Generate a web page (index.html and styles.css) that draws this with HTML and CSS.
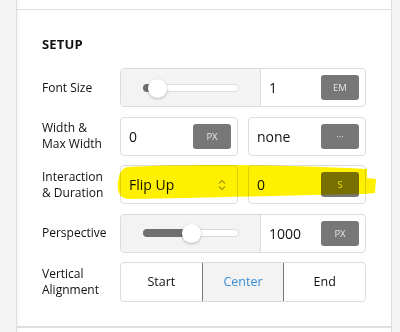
FILE: index.html
```html
<!DOCTYPE html>
<html lang="en">
<head>
  <meta charset="UTF-8" />
  <title>Setup</title>
  <link rel="stylesheet" href="styles.css">
</head>
<body>
  <div class="side"></div>
  <div class="panel">
    <div class="section top"></div>

    <div class="section setup">
      <h3>SETUP</h3>

      <div class="row">
        <div class="label">Font Size</div>
        <div class="box">
          <div class="range">
            <div class="track"><div class="fill" style="width: 14px"></div><div class="knob" style="left: 14px"></div></div>
          </div>
          <div class="field"><span class="val">1</span><span class="unit">EM</span></div>
        </div>
      </div>

      <div class="row">
        <div class="label">Width &amp;<br />Max Width</div>
        <div class="pair">
          <div class="box half"><div class="field"><span class="val">0</span><span class="unit">PX</span></div></div>
          <div class="box half"><div class="field"><span class="val">none</span><span class="unit">···</span></div></div>
        </div>
      </div>

      <div class="row">
        <div class="label">Interaction<br />&amp; Duration</div>
        <div class="pair">
          <div class="box half">
            <div class="field select"><span class="val">Flip Up</span>
              <svg class="chev" width="10" height="14" viewBox="0 0 10 14"><path d="M2 5.5 L5 2.5 L8 5.5 M2 8.5 L5 11.5 L8 8.5" fill="none" stroke="#aaa" stroke-width="1.3"/></svg>
            </div>
          </div>
          <div class="box half"><div class="field"><span class="val">0</span><span class="unit">S</span></div></div>
        </div>
        <svg class="marker" width="270" height="40" viewBox="0 0 270 40">
          <path d="M13 4 C60 1 160 1 251 6 L251 15 L260 16 L259 30 L248 31 C180 32 90 35 12 36 C2 35 0 26 3 13 C5 7 8 4 13 4 Z" fill="#fff000"/>
        </svg>
      </div>

      <div class="row">
        <div class="label">Perspective</div>
        <div class="box">
          <div class="range">
            <div class="track"><div class="fill" style="width: 48px"></div><div class="knob" style="left: 48px"></div></div>
          </div>
          <div class="field"><span class="val">1000</span><span class="unit">PX</span></div>
        </div>
      </div>

      <div class="row">
        <div class="label">Vertical<br />Alignment</div>
        <div class="box seg">
          <div class="opt">Start</div>
          <div class="opt on">Center</div>
          <div class="opt">End</div>
        </div>
      </div>
    </div>

    <div class="section"></div>
  </div>
</body>
</html>
```
FILE: styles.css
```css
body { margin: 0; background: #f3f3f3; font-family: "Open Sans", "Noto Sans", sans-serif; color: #111; display: flex; height: 332px; overflow: hidden; }
.side { width: 16px; flex: none; }
.panel { width: 374px; flex: none; background: #fff; border-left: 1px solid #dedede; border-right: 1px solid #dedede; box-shadow: inset 4px 0 4px -3px rgba(0,0,0,0.06); }
.section { border-bottom: 1px solid #dedede; }
.top { height: 9px; }
.setup { padding: 26px 25px 24px 25px; height: 266px; }
h3 { margin: 0 0 16px 0; font-size: 13px; font-weight: 700; letter-spacing: 0.2px; line-height: 16px; }
.row { position: relative; display: flex; align-items: center; height: 39px; margin-bottom: 9.5px; }
.label { width: 78px; flex: none; font-size: 12px; line-height: 16px; }
.box { display: flex; flex: 1; height: 37px; border: 1px solid #dcdcdc; border-radius: 4px; overflow: hidden; background: #fff; }
.pair { flex: 1; display: flex; gap: 10px; }
.half { flex: 1; }
.range { width: 140px; flex: none; background: #f3f3f3; border-right: 1px solid #dcdcdc; display: flex; align-items: center; padding-left: 22px; box-sizing: border-box; }
.track { position: relative; width: 96px; height: 8px; border: 1px solid #dcdcdc; border-radius: 5px; background: #fff; box-sizing: border-box; }
.fill { height: 8px; margin-top: -1px; margin-left: -1px; border-radius: 5px 0 0 5px; background: #6f6f6f; }
.knob { position: absolute; top: -6px; width: 19px; height: 19px; margin-left: -10px; border-radius: 50%; background: #fff; box-shadow: 0 1px 3px rgba(0,0,0,0.25); }
.field { flex: 1; display: flex; align-items: center; justify-content: space-between; padding: 0 6px 0 8px; }
.val { font-size: 14px; }
.unit { width: 38px; height: 25px; border-radius: 3px; background: #777; color: #e6e6e6; font-size: 9.5px; display: flex; align-items: center; justify-content: center; }
.select { padding-right: 10px; }
.chev { display: block; }
.marker { position: absolute; left: 74px; top: -2px; mix-blend-mode: multiply; pointer-events: none; }
.seg { height: 38px; }
.opt { flex: 1; display: flex; align-items: center; justify-content: center; font-size: 12.5px; }
.opt.on { background: #f3f3f3; border: 1px solid #777; margin: -1px 0; color: #3c8fd6; }
```
